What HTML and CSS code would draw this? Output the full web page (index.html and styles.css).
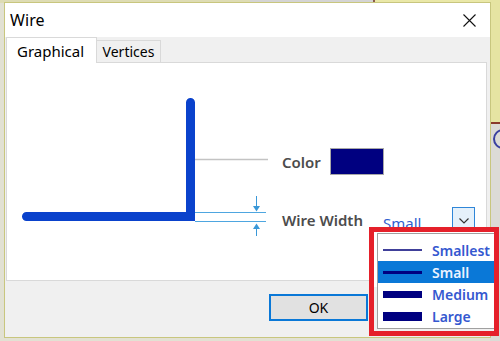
FILE: index.html
```html
<!DOCTYPE html>
<html>
<head>
<meta charset="utf-8">
<link rel="stylesheet" href="styles.css">
</head>
<body>
<div class="desk-top-left"></div>
<div class="desk-top-mid"></div>
<div class="desk-top-right"></div>
<div class="desk-right-upper"></div>
<div class="desk-right-lower"><span class="desk-ring"></span></div>

<div class="dialog">
  <div class="titlebar">
    <span class="title">Wire</span>
    <svg class="close" width="13" height="13" viewBox="0 0 13 13">
      <path d="M0.5 0.5 L12.5 12.5 M12.5 0.5 L0.5 12.5" stroke="#111" stroke-width="1.1" fill="none"/>
    </svg>
  </div>
  <div class="tabs">
    <div class="tab active">Graphical</div>
    <div class="tab">Vertices</div>
  </div>
  <div class="panel">
    <svg class="drawing" width="270" height="217" viewBox="7 64 270 217">
      <line x1="195" y1="160.5" x2="268" y2="160.5" stroke="#c3c3c3" stroke-width="1.6"/>
      <line x1="195" y1="213.5" x2="266" y2="213.5" stroke="#4ea6e0" stroke-width="1"/>
      <line x1="195" y1="222.5" x2="266" y2="222.5" stroke="#4ea6e0" stroke-width="1"/>
      <line x1="256.5" y1="197" x2="256.5" y2="208" stroke="#3a98d8" stroke-width="1"/>
      <polygon points="253,207 260,207 256.5,212.5" fill="#3a98d8"/>
      <line x1="256.5" y1="229" x2="256.5" y2="237" stroke="#3a98d8" stroke-width="1"/>
      <polygon points="253,230 260,230 256.5,224.5" fill="#3a98d8"/>
      <path d="M26.5 217.5 H190.5 V103.5" stroke="#0a42cc" stroke-width="9" fill="none" stroke-linecap="round" stroke-linejoin="miter"/>
    </svg>
    <div class="props">
      <div class="prop-row color-row">
        <span class="label color-label">Color</span>
        <span class="swatch"></span>
      </div>
      <div class="prop-row width-row">
        <span class="label width-label">Wire Width</span>
        <span class="value">Small</span>
        <span class="drop-btn">
          <svg width="10" height="6" viewBox="0 0 10 6"><path d="M0.5 0.5 L5 5 L9.5 0.5" stroke="#333" stroke-width="1.2" fill="none"/></svg>
        </span>
      </div>
    </div>
  </div>
  <div class="footer">
    <button class="ok">OK</button>
  </div>
</div>

<div class="highlight">
  <div class="list">
    <div class="item"><span class="sample s1"></span><span class="name">Smallest</span></div>
    <div class="item selected"><span class="sample s2"></span><span class="name">Small</span></div>
    <div class="item"><span class="sample s3"></span><span class="name">Medium</span></div>
    <div class="item"><span class="sample s4"></span><span class="name">Large</span></div>
  </div>
</div>
</body>
</html>
```
FILE: styles.css
```css
html, body {
  margin: 0;
  padding: 0;
}
body {
  width: 500px;
  height: 341px;
  overflow: hidden;
  position: relative;
  background: #e2e1d3;
  font-family: "Noto Sans", "Open Sans", sans-serif;
}

/* desktop fragments around the dialog */
.desk-top-left {
  position: absolute; left: 0; top: 0; width: 250px; height: 3px;
  background: #dedcb4;
}
.desk-top-mid {
  position: absolute; left: 250px; top: 0; width: 123px; height: 3px;
  background: #d4d4d4;
  border-right: 2px solid #8c5a4a;
}
.desk-top-right {
  position: absolute; left: 375px; top: 0; width: 125px; height: 3px;
  background: #eae8a8;
}
.desk-right-upper {
  position: absolute; left: 490px; top: 0; width: 10px; height: 122px;
  background: #e6e4a2;
  border-bottom: 2px solid #8a3a2c;
}
.desk-right-lower {
  position: absolute; left: 490px; top: 124px; width: 10px; height: 217px;
  background: #dcdbd6;
  overflow: hidden;
}
.desk-ring {
  position: absolute; left: 3px; top: 5px; width: 16px; height: 16px;
  border: 2px solid #3a40a0; border-radius: 50%;
}

/* dialog window */
.dialog {
  position: absolute;
  left: 4px;
  top: 2px;
  width: 487px;
  height: 336px;
  box-sizing: border-box;
  border: 1px solid #c8c67e;
  background: #f0f0f0;
  display: flex;
  flex-direction: column;
}
.titlebar {
  height: 34px;
  background: #fff;
  display: flex;
  align-items: center;
  justify-content: space-between;
  padding: 0 14px 0 5px;
  flex: none;
}
.title {
  font-size: 16px;
  color: #000;
  letter-spacing: 0.1px;
}
.close { display: block; }

.tabs {
  height: 26px;
  display: flex;
  align-items: flex-end;
  margin-left: 1px;
  margin-bottom: -1px;
  position: relative;
  z-index: 1;
  flex: none;
}
.tab {
  box-sizing: border-box;
  height: 23px;
  width: 64px;
  border: 1px solid #d9d9d9;
  border-left: none;
  background: #f0f0f0;
  font-size: 14px;
  color: #000;
  text-align: center;
  line-height: 21px;
}
.tab.active {
  height: 26px;
  width: 91px;
  border-left: 1px solid #d9d9d9;
  border-bottom: none;
  background: #fff;
  text-align: left;
  padding-left: 10px;
  line-height: 26px;
  font-size: 15px;
}

.panel {
  height: 219px;
  box-sizing: border-box;
  margin: 0 3px 0 1px;
  border: 1px solid #d9d9d9;
  background: #fff;
  display: flex;
  flex: none;
}
.drawing {
  display: block;
  flex: none;
}
.props {
  padding-top: 85px;
  padding-left: 5px;
  display: flex;
  flex-direction: column;
  gap: 32px;
}
.prop-row {
  display: flex;
  align-items: center;
}
.color-row { height: 27px; }
.width-row { height: 28px; }
.label {
  font-size: 15px;
  font-weight: 600;
  color: #4c4c4c;
  white-space: nowrap;
}
.color-label { width: 48px; }
.width-label { width: 101px; padding-bottom: 2px; }
.swatch {
  box-sizing: border-box;
  width: 54px;
  height: 27px;
  border: 1px solid #a8a8a8;
  background: #000080;
}
.value {
  width: 69px;
  font-size: 15px;
  color: #2f5fd0;
  padding-top: 3px;
}
.drop-btn {
  box-sizing: border-box;
  width: 23px;
  height: 28px;
  border: 1px solid #2f86d8;
  background: #e5f1fb;
  display: flex;
  align-items: center;
  justify-content: center;
}
.drop-btn svg { display: block; }

.footer {
  flex: 1;
  display: flex;
  justify-content: flex-end;
  align-items: flex-start;
  padding: 13px 122px 0 0;
}
.ok {
  box-sizing: border-box;
  width: 99px;
  height: 27px;
  border: 2px solid #0a78d7;
  background: #e1e1e1;
  font-family: "Noto Sans", sans-serif;
  font-size: 14px;
  color: #000;
  padding: 0;
}

/* red highlight over the open drop-down list */
.highlight {
  position: absolute;
  left: 369px;
  top: 227px;
  width: 130px;
  height: 109px;
  box-sizing: border-box;
  border: 5px solid #e5202a;
  overflow: hidden;
  background: linear-gradient(#fff 0, #fff 55px, #f0f0f0 55px);
}
.list {
  position: absolute;
  left: 3px;
  top: 1px;
  width: 130px;
  height: 96px;
  box-sizing: border-box;
  border: 1px solid #a0a0a0;
  background: #fff;
  padding-top: 5px;
}
.item {
  height: 22px;
  display: flex;
  align-items: center;
  padding-left: 5px;
}
.item.selected {
  background: #0a78d7;
}
.sample {
  width: 39px;
  background: #000080;
  flex: none;
  margin-right: 10px;
}
.s1 { height: 2px; background: #40409a; }
.s2 { height: 3px; }
.s3 { height: 7px; }
.s4 { height: 9px; }
.item.selected .s2 { background: #000080; }
.name {
  font-size: 14px;
  font-weight: 600;
  color: #3558d0;
  white-space: nowrap;
}
.item.selected .name { color: #eaf2ff; }
```
